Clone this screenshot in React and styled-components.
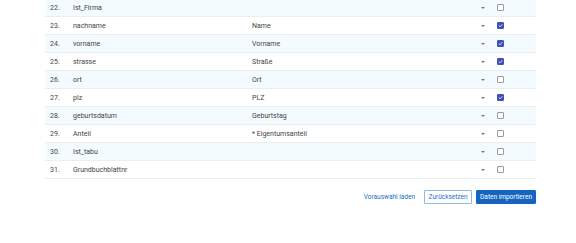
import styled, { createGlobalStyle } from "styled-components";

const GlobalStyle = createGlobalStyle`
  body {
    margin: 0;
    background: #ffffff;
    font-family: Roboto, "Liberation Sans", sans-serif;
  }
`

const Page = styled.div`
  width: 491px;
  margin-left: 45px;
  margin-top: -1px;
`
const Table = styled.div`
  display: flex;
  flex-direction: column;
`
const Row = styled.div`
  display: grid;
  grid-template-columns: 28px 179px 228px 17px 1fr;
  align-items: center;
  height: 17px;
  border-bottom: 1px solid #e8eef1;
  background-color: ${props => props.striped ? '#f3fbfe' : '#ffffff'};
  font-size: 7px;
  color: #444444;
`
const Cell = styled.div`
  padding-left: ${props => props.first ? '5px' : '0'};
  white-space: nowrap;
`
const Arrow = styled.div`
  width: 0;
  height: 0;
  margin-left: 1px;
  border-left: 2px solid transparent;
  border-right: 2px solid transparent;
  border-top: 2px solid #777;
`
const Box = styled.div`
  width: 7px;
  height: 7px;
  box-sizing: border-box;
  border-radius: 1px;
  display: flex;
  align-items: center;
  justify-content: center;
  border: 1px solid ${props => props.checked ? '#3f51b5' : '#9a9a9a'};
  background-color: ${props => props.checked ? '#3f51b5' : '#ffffff'};
`
const Footer = styled.div`
  display: flex;
  justify-content: flex-end;
  align-items: center;
  gap: 4px;
  margin-top: 11px;
`
const LinkButton = styled.button`
  border: none;
  background: none;
  padding: 0;
  font-family: inherit;
  font-size: 6.5px;
  color: #1e6fc8;
  margin-right: 5px;
`
const Button = styled.button`
  height: 14px;
  box-sizing: border-box;
  padding: 0 3px;
  min-width: ${props => props.primary ? '58px' : '48px'};
  border-radius: 1px;
  font-family: inherit;
  font-size: 6.5px;
  border: 1px solid ${props => props.primary ? '#1565c0' : '#8fb8e6'};
  background-color: ${props => props.primary ? '#1565c0' : '#ffffff'};
  color: ${props => props.primary ? '#ffffff' : '#1e6fc8'};
`

const rows = [
  { n: 22, name: 'Ist_Firma', label: '', checked: false },
  { n: 23, name: 'nachname', label: 'Name', checked: true },
  { n: 24, name: 'vorname', label: 'Vorname', checked: true },
  { n: 25, name: 'strasse', label: 'Straße', checked: true },
  { n: 26, name: 'ort', label: 'Ort', checked: false },
  { n: 27, name: 'plz', label: 'PLZ', checked: true },
  { n: 28, name: 'geburtsdatum', label: 'Geburtstag', checked: false },
  { n: 29, name: 'Anteil', label: '* Eigentumsanteil', checked: false },
  { n: 30, name: 'Ist_tabu', label: '', checked: false },
  { n: 31, name: 'Grundbuchblattnr', label: '', checked: false },
]

const Check = () => (
  <svg width="5" height="5" viewBox="0 0 10 10">
    <path d="M1.5 5.2 L4 7.6 L8.6 2.6" fill="none" stroke="#fff" strokeWidth="1.6" />
  </svg>
)

const App = () => {
  return (
    <Page>
      <GlobalStyle />
      <Table>
        {rows.map((row, i) => (
          <Row key={row.n} striped={i % 2 === 0}>
            <Cell first>{row.n}.</Cell>
            <Cell>{row.name}</Cell>
            <Cell>{row.label}</Cell>
            <Cell><Arrow /></Cell>
            <Cell>
              <Box checked={row.checked}>{row.checked && <Check />}</Box>
            </Cell>
          </Row>
        ))}
      </Table>
      <Footer>
        <LinkButton>Vorauswahl laden</LinkButton>
        <Button>Zurücksetzen</Button>
        <Button primary>Daten importieren</Button>
      </Footer>
    </Page>
  )
}

export default App;
